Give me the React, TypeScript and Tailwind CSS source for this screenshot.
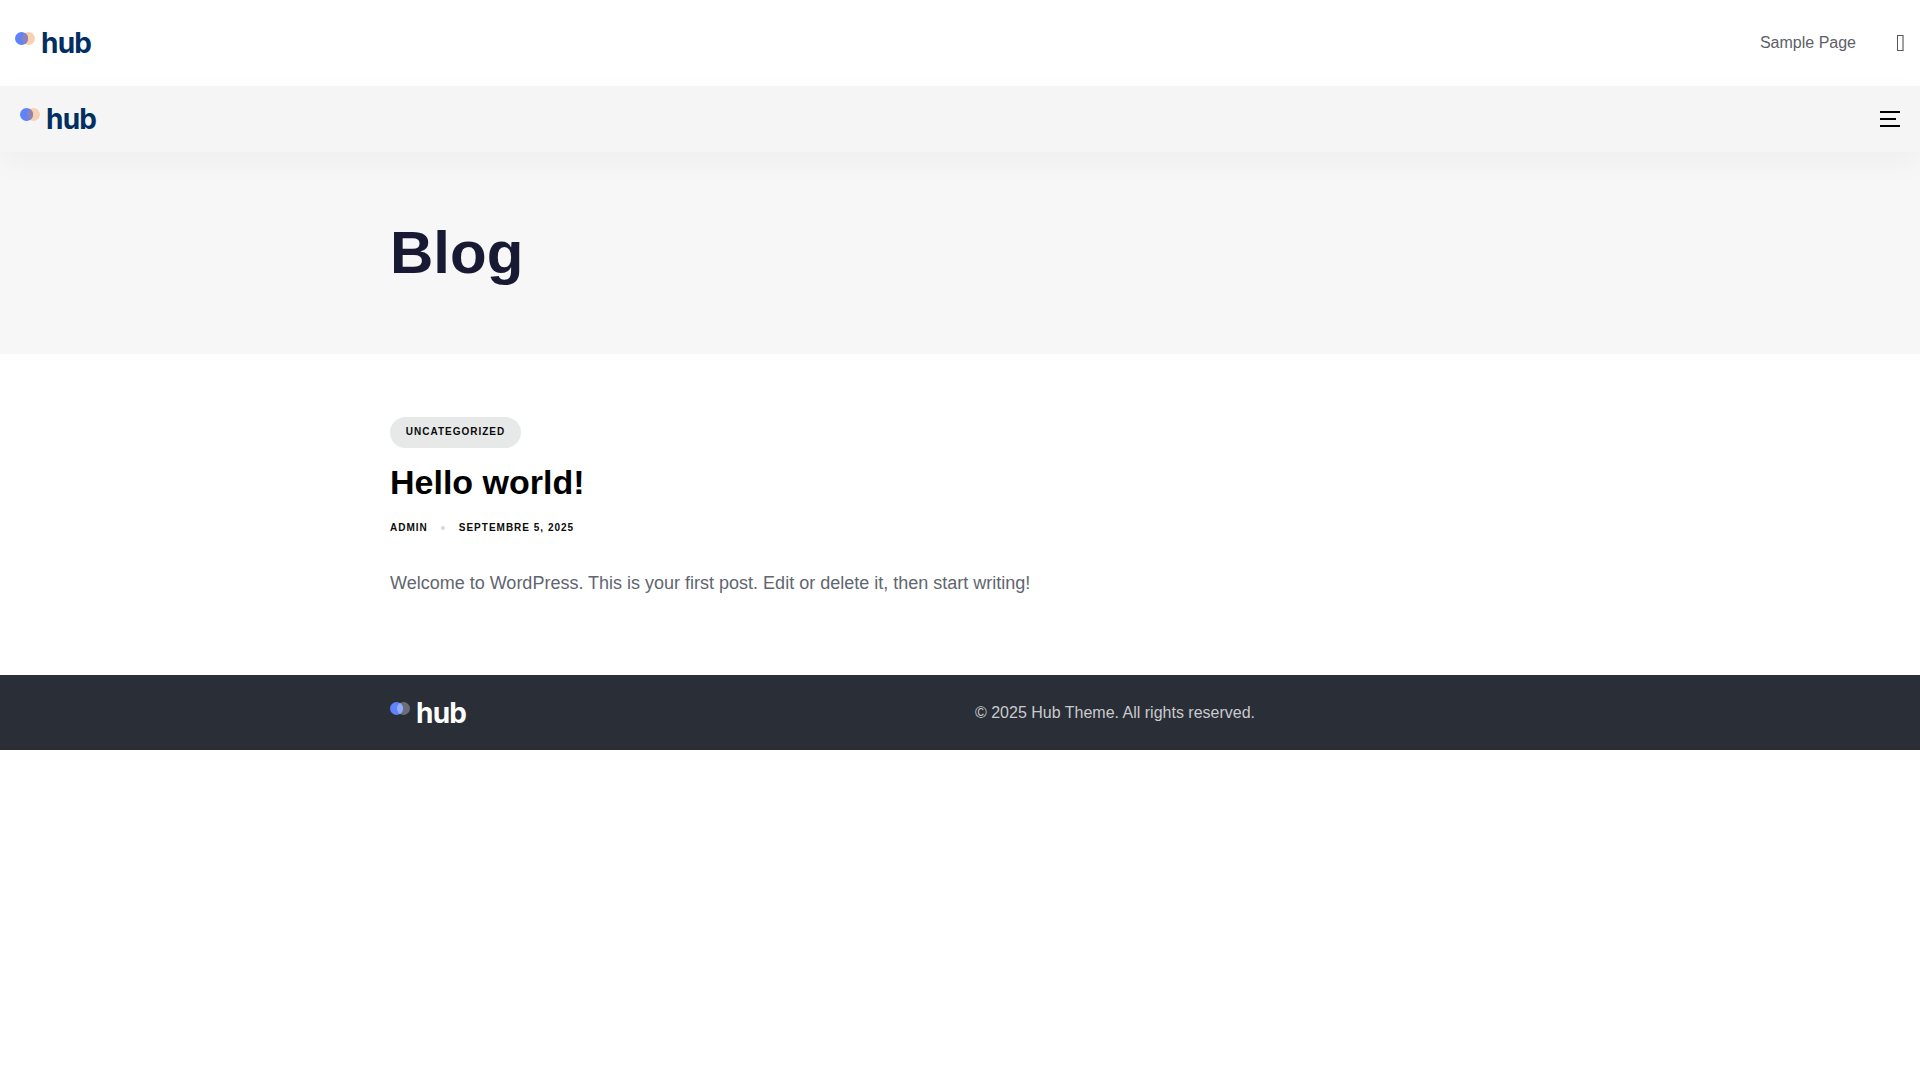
const sans = "font-['Liberation_Sans',Arial,sans-serif]";

function Logo({ dark }: { dark?: boolean }) {
  return (
    <div className="flex items-start">
      <svg width="21" height="14" viewBox="0 0 21 14" className="mt-[2px] shrink-0">
        {dark ? (
          <>
            <circle cx="13.5" cy="6.5" r="6.5" fill="#6b6e75" />
            <circle cx="6.5" cy="6.5" r="6.5" fill="#5f83fb" />
            <path d="M10 1a6.5 6.5 0 0 1 0 11a6.5 6.5 0 0 1 0-11z" fill="#93abfb" />
          </>
        ) : (
          <>
            <circle cx="13.5" cy="6.5" r="6.5" fill="#f8d1b3" />
            <circle cx="6.5" cy="6.5" r="6.5" fill="#5f83fb" />
            <path d="M10 1a6.5 6.5 0 0 1 0 11a6.5 6.5 0 0 1 0-11z" fill="#8e82b8" />
          </>
        )}
      </svg>
      <span
        className={`ml-[5px] font-['Inter',sans-serif] text-[28px] font-bold leading-[26px] tracking-[-0.8px] ${
          dark ? "text-white" : "text-[#012f61]"
        }`}
      >
        hub
      </span>
    </div>
  );
}

export default function App() {
  return (
    <div className={`${sans} min-h-[1080px] bg-white`}>
      <header className="flex h-[86px] items-center justify-between bg-white pl-[15px] pr-4">
        <Logo />
        <div className="flex items-center">
          <a className="mr-[1px] text-base text-[#5c5f68]">Sample Page</a>
          <span className="ml-[40px] box-border h-[16px] w-[7px] border border-r-2 border-[#55565c] border-r-[#a0a0a0]" />
        </div>
      </header>
      <div className="relative z-10 flex h-[66px] items-center justify-between bg-[#f5f5f5] pl-5 pr-5 shadow-[0_10px_30px_rgba(0,0,0,0.04)]">
        <Logo />
        <div className="flex w-5 flex-col gap-[5px]">
          <span className="h-0.5 w-5 bg-black" />
          <span className="h-0.5 w-4 bg-black" />
          <span className="h-0.5 w-5 bg-black" />
        </div>
      </div>
      <section className="flex h-[202px] items-center bg-[#f7f7f7] pl-[390px]">
        <h1 className="text-[60px] font-bold leading-none text-[#171a32]">Blog</h1>
      </section>
      <main className="h-[321px] pl-[390px] pt-[63px]">
        <span className="flex h-[31px] w-[131px] items-center justify-center rounded-full bg-[#e7e9e9] pb-[2px] text-[10px] font-bold tracking-[1px] text-[#0b0b0b]">
          UNCATEGORIZED
        </span>
        <h2 className="mt-[13px] text-[34px] font-bold leading-[42px] text-black">Hello world!</h2>
        <div className="mt-[17px] flex items-center text-[10px] font-bold tracking-[1px] text-[#0b0b0b]">
          <span>ADMIN</span>
          <span className="ml-[13px] mr-[14px] h-1 w-1 rounded-full bg-[#d8d8d8]" />
          <span>SEPTEMBRE 5, 2025</span>
        </div>
        <p className="mt-[34px] text-lg leading-[28px] text-[#5f6670]">
          Welcome to WordPress. This is your first post. Edit or delete it, then start writing!
        </p>
      </main>
      <footer className="h-[75px] bg-[#2a2e37]">
        <div className="ml-[390px] grid h-full w-[1140px] grid-cols-[310px_1fr] items-center">
          <Logo dark />
          <p className="text-center text-base text-[#c9cacd]">© 2025 Hub Theme. All rights reserved.</p>
        </div>
      </footer>
    </div>
  );
}
